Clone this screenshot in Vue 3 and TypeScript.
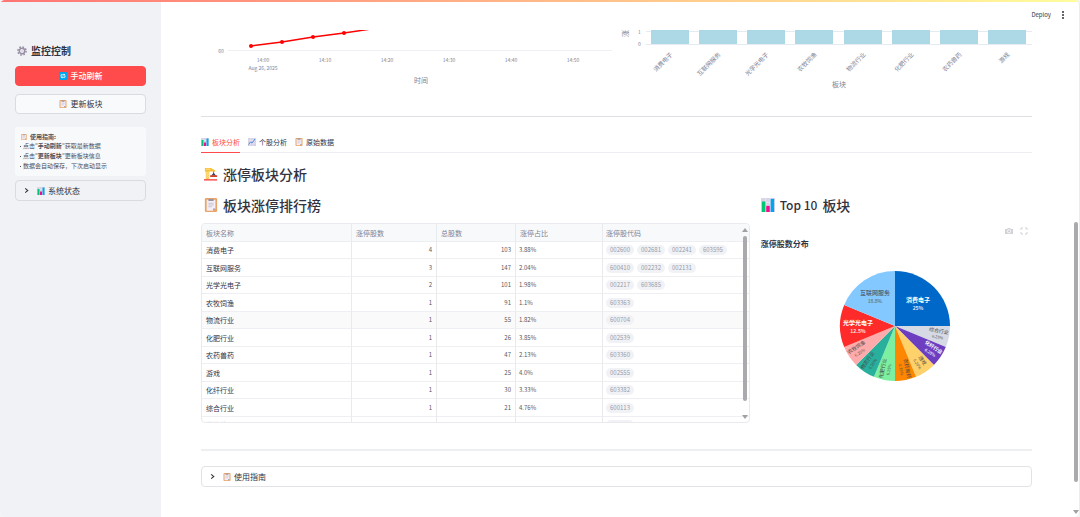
<script setup lang="ts">
interface Row {
  name: string
  hits: number
  total: number
  ratio: string
  codes: string[]
}

interface Slice {
  name: string
  pct: string
  from: number
  to: number
  fill: string
  ink: string
}

const rows: Row[] = [
  { name: '消费电子', hits: 4, total: 103, ratio: '3.88%', codes: ['002600', '002681', '002241', '603595'] },
  { name: '互联网服务', hits: 3, total: 147, ratio: '2.04%', codes: ['600410', '002232', '002131'] },
  { name: '光学光电子', hits: 2, total: 101, ratio: '1.98%', codes: ['002217', '603685'] },
  { name: '农牧饲渔', hits: 1, total: 91, ratio: '1.1%', codes: ['603363'] },
  { name: '物流行业', hits: 1, total: 55, ratio: '1.82%', codes: ['600704'] },
  { name: '化肥行业', hits: 1, total: 26, ratio: '3.85%', codes: ['002539'] },
  { name: '农药兽药', hits: 1, total: 47, ratio: '2.13%', codes: ['603360'] },
  { name: '游戏', hits: 1, total: 25, ratio: '4.0%', codes: ['002555'] },
  { name: '化纤行业', hits: 1, total: 30, ratio: '3.33%', codes: ['603382'] },
  { name: '综合行业', hits: 1, total: 21, ratio: '4.76%', codes: ['600113'] },
  { name: '装修装饰', hits: 1, total: 24, ratio: '4.17%', codes: ['603030'] },
]

const times = ['14:00', '14:10', '14:20', '14:30', '14:40', '14:50']
const sectors = ['消费电子', '互联网服务', '光学光电子', '农牧饲渔', '物流行业', '化肥行业', '农药兽药', '游戏']
const barX = (i: number): number => 30 + Math.floor(i * 48.25)

// Angles in degrees, clockwise, 0 at three o'clock
const slices: Slice[] = [
  { name: '消费电子', pct: '25%', from: -90, to: 0, fill: '#0068c9', ink: '#ffffff' },
  { name: '综合行业', pct: '6.25%', from: 0, to: 22.5, fill: '#d5dae5', ink: '#444444' },
  { name: '化纤行业', pct: '6.25%', from: 22.5, to: 45, fill: '#6d3fc0', ink: '#ffffff' },
  { name: '游戏', pct: '6.25%', from: 45, to: 67.5, fill: '#ffd16a', ink: '#444444' },
  { name: '农药兽药', pct: '6.25%', from: 67.5, to: 90, fill: '#ff8700', ink: '#444444' },
  { name: '化肥行业', pct: '6.25%', from: 90, to: 112.5, fill: '#7defa1', ink: '#444444' },
  { name: '物流行业', pct: '6.25%', from: 112.5, to: 135, fill: '#29b09d', ink: '#444444' },
  { name: '农牧饲渔', pct: '6.25%', from: 135, to: 157.5, fill: '#ffabab', ink: '#444444' },
  { name: '光学光电子', pct: '12.5%', from: 157.5, to: 202.5, fill: '#ff2b2b', ink: '#ffffff' },
  { name: '互联网服务', pct: '18.8%', from: 202.5, to: 270, fill: '#83c9ff', ink: '#444444' },
]

const R = 55
const point = (deg: number, r: number): string => {
  const a = (deg * Math.PI) / 180
  return `${(r * Math.cos(a)).toFixed(2)} ${(r * Math.sin(a)).toFixed(2)}`
}
const wedge = (s: Slice): string => `M0 0L${point(s.from, R)}A${R} ${R} 0 0 1 ${point(s.to, R)}Z`
const small = (s: Slice): boolean => s.to - s.from < 30
const place = (s: Slice): string => {
  const mid = (s.from + s.to) / 2
  if (!small(s)) {
    const spots: Record<string, string> = {
      消费电子: '23 -22',
      光学光电子: '-37 1',
      互联网服务: '-20 -29',
    }
    return `translate(${spots[s.name]})`
  }
  return `translate(${point(mid, 44)}) rotate(${mid > 90 ? mid - 180 : mid})`
}
</script>

<template>
  <div class="app">
    <svg class="defs" aria-hidden="true">
      <symbol id="i-chart" viewBox="0 0 16 16">
        <rect width="16" height="16" rx="1" fill="#d9d3e6" />
        <path d="M0 5h16M0 10h16M5.500 0v16M10.500 0v16" stroke="#f3effa" stroke-width=".7" />
        <rect x="1" y="4" width="4" height="12" fill="#00c774" />
        <rect x="6" y="9" width="4" height="7" fill="#f70a8d" />
        <rect x="11" y="1" width="4" height="15" fill="#00a6ed" />
      </symbol>
      <symbol id="i-trend" viewBox="0 0 16 16">
        <rect width="16" height="16" rx="1" fill="#d5d0e6" />
        <path d="M0 5h16M0 10h16M5 0v16M10 0v16" stroke="#f3effa" stroke-width=".8" />
        <path d="M1 13l4-5 3 2 6-8" fill="none" stroke="#3f83d8" stroke-width="1.800" />
      </symbol>
      <symbol id="i-clip" viewBox="0 0 16 16">
        <rect x="1" y="0" width="14" height="16" rx="1.500" fill="#e8a566" />
        <path d="M3 2h10v10l-2.500 2.500H3z" fill="#f3eef8" />
        <path d="M10.500 14.500V12H13z" fill="#998ea4" />
        <path d="M5 6h6M5 8h6M5 10h4" stroke="#b9b2c2" stroke-width=".8" />
        <path d="M5 1h6v2.500H5z" fill="#9b92a6" />
      </symbol>
      <symbol id="i-crane" viewBox="0 0 16 16">
        <path d="M1 1h7l5 3v1H6v9H2V5H1z" fill="#f9c23c" />
        <path d="M2.500 5.500l3 2.500-3 2.500 3 2.500M5.500 5.500l-3 2.500 3 2.500-3 2.500M2 2.500h5" fill="none" stroke="#fff0bf" stroke-width=".7" />
        <path d="M11 5v3" stroke="#433b6b" stroke-width=".8" />
        <path d="M8 10l3-3.500 3 3.500z" fill="#433b6b" />
        <path d="M7 9.500h8v2H7z" fill="#d3402c" />
        <path d="M0 14h15v1.500H0z" fill="#f8312f" />
      </symbol>
      <symbol id="i-gear" viewBox="0 0 16 16">
        <circle cx="8" cy="8" r="6.500" fill="none" stroke="#998ea4" stroke-width="2.500" stroke-dasharray="2.550 2.550" />
        <circle cx="8" cy="8" r="4.300" fill="none" stroke="#998ea4" stroke-width="2.400" />
        <circle cx="8" cy="8" r="1.200" fill="#c5bccd" />
      </symbol>
      <symbol id="i-sync" viewBox="0 0 16 16">
        <rect width="16" height="16" rx="2" fill="#00a6ed" />
        <path d="M4 9V5.500h6.500M12 7v3.500H5.500" fill="none" stroke="#fff" stroke-width="1.600" />
        <path d="M9.500 3l3 2.500-3 2.500zM6.500 8l-3 2.500 3 2.500z" fill="#fff" />
      </symbol>
      <symbol id="i-chev" viewBox="0 0 8 8">
        <path d="M2.500 1.500L5.500 4 2.500 6.500" fill="none" stroke="#31333f" stroke-width="1.200" />
      </symbol>
    </svg>

    <aside class="side">
      <h2 class="side-title"><svg class="ic10"><use href="#i-gear" /></svg>监控控制</h2>
      <button class="btn primary" type="button"><svg class="ic8"><use href="#i-sync" /></svg>手动刷新</button>
      <button class="btn" type="button"><svg class="ic8"><use href="#i-clip" /></svg>更新板块</button>
      <div class="tips">
        <p class="tips-head"><svg class="ic6"><use href="#i-clip" /></svg><b>使用指南:</b></p>
        <ul>
          <li>点击"<b>手动刷新</b>"获取最新数据</li>
          <li>点击"<b>更新板块</b>"更新板块信息</li>
          <li>数据会自动保存，下次启动显示</li>
        </ul>
      </div>
      <button class="expander" type="button">
        <svg class="chev"><use href="#i-chev" /></svg><svg class="ic8"><use href="#i-chart" /></svg>系统状态
      </button>
    </aside>

    <main class="main">
      <header class="top">
        <button class="deploy" type="button">Deploy</button>
        <button class="dots" type="button" aria-label="菜单">
          <svg viewBox="0 0 4 10"><circle cx="2" cy="2" r="1" /><circle cx="2" cy="5" r="1" /><circle cx="2" cy="8" r="1" /></svg>
        </button>
      </header>

      <div class="content">
        <section class="charts">
          <svg viewBox="0 0 411 78">
            <path d="M27 20.500H411" stroke="#edf0f5" />
            <path d="M50 16L81 12L112 7L143 3L170 -1" fill="none" stroke="#ff0000" stroke-width="1.500" />
            <g fill="#ff0000">
              <circle cx="50" cy="16" r="2" /><circle cx="81" cy="12" r="2" />
              <circle cx="112" cy="7" r="2" /><circle cx="143" cy="3" r="2" />
            </g>
            <g class="axis" text-anchor="middle">
              <text x="20" y="23">60</text>
              <text v-for="(t, i) in times" :key="t" :x="62 + i * 62" y="32">{{ t }}</text>
              <text x="62" y="40">Aug 26, 2025</text>
              <text class="axis-name" x="220" y="53">时间</text>
            </g>
          </svg>
          <svg viewBox="0 0 411 78">
            <path d="M25 1.500H411M25 14.500H411" stroke="#e6eaf1" />
            <rect v-for="(s, i) in sectors" :key="s" :x="barX(i)" y="0" width="38" height="14" fill="#add8e6" />
            <g class="axis">
              <text x="17" y="4">1</text>
              <text x="17" y="16">0</text>
              <text class="axis-name" transform="translate(7 7) rotate(-90)">涨停股数</text>
              <text
                v-for="(s, i) in sectors"
                :key="s"
                class="sector"
                text-anchor="end"
                :transform="`translate(${barX(i) + 22} 25) rotate(-45)`"
              >{{ s }}</text>
              <text class="axis-name" x="218" y="57" text-anchor="middle">板块</text>
            </g>
          </svg>
        </section>
        <hr class="rule" />

        <nav class="tabs" role="tablist">
          <button class="tab on" role="tab" type="button" aria-selected="true"><svg class="ic8"><use href="#i-chart" /></svg>板块分析</button>
          <button class="tab" role="tab" type="button"><svg class="ic8"><use href="#i-trend" /></svg>个股分析</button>
          <button class="tab" role="tab" type="button"><svg class="ic8"><use href="#i-clip" /></svg>原始数据</button>
        </nav>

        <h2 class="head"><svg class="ic14"><use href="#i-crane" /></svg>涨停板块分析</h2>

        <section class="split">
          <div>
            <h2 class="head"><svg class="ic14"><use href="#i-clip" /></svg>板块涨停排行榜</h2>
            <div class="frame">
              <table>
                <colgroup><col class="c1" /><col class="c2" /><col class="c3" /><col class="c4" /><col /></colgroup>
                <thead>
                  <tr><th>板块名称</th><th>涨停股数</th><th>总股数</th><th>涨停占比</th><th>涨停股代码</th></tr>
                </thead>
                <tbody>
                  <tr v-for="r in rows" :key="r.name" :class="{ hover: r.name === '物流行业' }">
                    <td class="name">{{ r.name }}</td>
                    <td class="num">{{ r.hits }}</td>
                    <td class="num">{{ r.total }}</td>
                    <td class="ratio">{{ r.ratio }}</td>
                    <td><div class="codes"><span v-for="c in r.codes" :key="c">{{ c }}</span></div></td>
                  </tr>
                </tbody>
              </table>
              <div class="bar inner"><i class="up"></i><i class="thumb"></i><i class="down"></i></div>
            </div>
          </div>

          <div class="right">
            <h2 class="head"><svg class="ic14"><use href="#i-chart" /></svg><span class="latin">Top 10</span>板块</h2>
            <div class="tools">
              <button type="button" aria-label="下载图片">
                <svg viewBox="0 0 8 8"><path d="M0 2h2l1-1h2l1 1h2v5H0z" fill="#d2d3d8" /><circle cx="4" cy="4.300" r="1.600" fill="#d2d3d8" stroke="#fff" stroke-width=".8" /></svg>
              </button>
              <button type="button" aria-label="全屏">
                <svg viewBox="0 0 8 8"><path d="M1 3V1h2M5 1h2v2M7 5v2H5M3 7H1V5" fill="none" stroke="#d2d3d8" /></svg>
              </button>
            </div>
            <h3 class="pie-title">涨停股数分布</h3>
            <svg class="pie" viewBox="-56 -56 112 112">
              <path v-for="s in slices" :key="s.name" :d="wedge(s)" :fill="s.fill" />
              <g
                v-for="s in slices"
                :key="s.name"
                text-anchor="middle"
                :class="{ small: small(s), strong: s.ink === '#ffffff' }"
                :fill="s.ink"
                :transform="place(s)"
              >
                <text y="-2">{{ s.name }}</text>
                <text class="pct" :y="small(s) ? 4 : 6">{{ s.pct }}</text>
              </g>
            </svg>
          </div>
        </section>

        <hr class="rule low" />
        <button class="expander wide" type="button">
          <svg class="chev"><use href="#i-chev" /></svg><svg class="ic8"><use href="#i-clip" /></svg>使用指南
        </button>
      </div>
    </main>
    <div class="bar page"><i class="thumb"></i><i class="down"></i></div>
  </div>
</template>

<style>
body {
  margin: 0;
  background: #f4f4f4;
}
</style>

<style scoped>
.app {
  position: relative;
  display: flex;
  box-sizing: border-box;
  height: 100vh;
  overflow: hidden;
  border-right: 1px solid #ececec;
  border-radius: 5px;
  background: #fff;
  color: #31333f;
  font-family: "Noto Sans CJK SC", "Noto Sans", sans-serif;
  font-size: 8px;
  line-height: 10px;
}
.app::before {
  content: "";
  position: absolute;
  inset: 0 0 auto;
  height: 2px;
  background: linear-gradient(90deg, #ff7474, #ffc78c 60%, #fffd9c);
}
.defs {
  position: absolute;
  width: 0;
  height: 0;
}
svg {
  flex: none;
}
button {
  margin: 0;
  padding: 0;
  border: 0;
  background: none;
  color: inherit;
  font: inherit;
}
h2,
h3,
p,
ul {
  margin: 0;
}
.ic6 { width: 6px; height: 6px; }
.ic8 { width: 8px; height: 8px; }
.ic10 { width: 10px; height: 10px; }
.ic14 { width: 14px; height: 14px; }
.chev { width: 7px; height: 7px; }

.side {
  display: flex;
  flex: none;
  flex-direction: column;
  box-sizing: border-box;
  width: 161px;
  padding: 44px 15px 0;
  background: #f0f2f6;
}
.side-title {
  display: flex;
  align-items: center;
  gap: 4px;
  padding-left: 2px;
  font-size: 10px;
  font-weight: 700;
  line-height: 14px;
}
.btn {
  display: flex;
  align-items: center;
  justify-content: center;
  gap: 4px;
  box-sizing: border-box;
  height: 20px;
  margin-top: 8px;
  border: 1px solid #d9dbe1;
  border-radius: 4px;
  background: #f9fafc;
}
.btn.primary {
  border-color: #ff4b4b;
  background: #ff4b4b;
  color: #fff;
  font-weight: 500;
}
.tips {
  margin-top: 13px;
  padding: 5px;
  border-radius: 3px;
  background: #f8f9fb;
  color: #4c4e58;
  font-size: 6px;
}
.tips ul {
  padding: 0;
  list-style: none;
  white-space: nowrap;
}
.tips li {
  display: flex;
  align-items: center;
}
.tips li::before {
  content: "";
  width: 1px;
  height: 1px;
  margin-right: 2px;
  background: #4c4e58;
}
.tips-head {
  display: flex;
  align-items: center;
  gap: 3px;
  padding-left: 1px;
  line-height: 9px;
}
.expander {
  display: flex;
  align-items: center;
  gap: 3px;
  box-sizing: border-box;
  width: 100%;
  height: 21px;
  margin-top: 4px;
  padding-left: 7px;
  border: 1px solid #d9dbe1;
  border-radius: 4px;
  text-align: left;
}
.expander .chev {
  margin-right: 4px;
}

.main {
  flex: 1;
  min-width: 0;
}
.top {
  display: flex;
  align-items: center;
  justify-content: flex-end;
  gap: 10px;
  height: 30px;
  padding-right: 14px;
}
.deploy {
  font-size: 6px;
}
.dots {
  display: flex;
}
.dots svg {
  width: 4px;
  height: 10px;
  fill: #31333f;
}
.content {
  padding: 0 47px 0 40px;
}
.charts {
  display: grid;
  grid-template-columns: 1fr 1fr;
  gap: 9px;
}
.charts svg {
  display: block;
  width: 100%;
}
.axis {
  fill: #808495;
  font-size: 5px;
}
.axis .sector {
  font-size: 6px;
}
.axis .axis-name {
  font-size: 7px;
}
.rule {
  height: 1px;
  margin: 8px 0 0;
  border: 0;
  background: #dfe0e3;
}
.tabs {
  display: flex;
  gap: 8px;
  margin-top: 15px;
  border-bottom: 1px solid #eceef2;
}
.tab {
  display: flex;
  align-items: center;
  gap: 3px;
  height: 21px;
  margin-bottom: -1px;
  border-bottom: 1px solid transparent;
  font-size: 7px;
}
.tab.on {
  border-bottom-color: #ff4b4b;
  color: #ff4b4b;
}
.head {
  display: flex;
  align-items: center;
  gap: 5px;
  padding-left: 3px;
  font-size: 14px;
  font-weight: 500;
  line-height: 20px;
}
.tabs + .head {
  margin: 11px 0;
}
.latin {
  font-size: 12px;
}
.split {
  display: grid;
  grid-template-columns: minmax(0, 2fr) minmax(0, 1fr);
  gap: 8px;
}
.frame {
  position: relative;
  box-sizing: border-box;
  height: 200px;
  margin-top: 8px;
  overflow: hidden;
  border: 1px solid #e9eaee;
  border-radius: 4px;
}
table {
  width: 100%;
  border-collapse: separate;
  border-spacing: 0;
  table-layout: fixed;
  font-size: 7px;
}
.c1 { width: 150px; }
.c2 { width: 85px; }
.c3 { width: 79px; }
.c4 { width: 87px; }
th,
td {
  box-sizing: border-box;
  height: 17px;
  padding: 0 4px;
  border-right: 1px solid #e9eaee;
  border-bottom: 1px solid #eeeff2;
  text-align: left;
  line-height: 10px;
}
tbody tr:nth-child(even) td {
  height: 18px;
}
th:last-child,
td:last-child {
  padding-left: 3px;
  border-right: 0;
}
th {
  height: 18px;
  background: #f8f9fb;
  color: #808495;
  font-weight: 400;
}
.hover td {
  background: #fafafb;
}
td.num,
td.ratio {
  color: #55575f;
  font-size: 6px;
}
td.num {
  text-align: right;
}
td.ratio {
  padding-left: 3px;
}
.codes {
  display: flex;
  gap: 3px;
}
.codes span {
  padding: 0 4px;
  border-radius: 5px;
  background: #f0f2f6;
  color: #9a9ca8;
  font-size: 6px;
}
.bar {
  position: absolute;
  display: flex;
  flex-direction: column;
  align-items: center;
  width: 5px;
}
.bar.inner {
  top: 4px;
  right: 1px;
  bottom: 3px;
  gap: 4px;
}
.bar .thumb {
  flex: 1;
  width: 4px;
  border-radius: 2px;
  background: #a9a9ae;
}
.inner .thumb {
  margin-bottom: 10px;
}
.up,
.down {
  width: 0;
  height: 0;
  border: 3px solid transparent;
}
.up {
  border-top: 0;
  border-bottom: 4px solid #a0a0a5;
}
.down {
  border-top: 4px solid #a0a0a5;
  border-bottom: 0;
}
.bar.page {
  top: 43%;
  right: 1px;
  bottom: 3px;
  gap: 28px;
}
.right {
  display: flex;
  flex-direction: column;
}
.tools {
  display: flex;
  justify-content: flex-end;
  gap: 7px;
  margin-top: 12px;
  padding-right: 4px;
}
.tools button {
  display: flex;
}
.tools svg {
  width: 8px;
  height: 8px;
}
.pie-title {
  margin-top: 4px;
  padding-left: 3px;
  font-size: 8px;
  font-weight: 700;
}
.pie {
  align-self: center;
  width: 112px;
  margin-top: 21px;
  font-size: 6px;
}
.pie .strong {
  font-weight: 700;
}
.pie .pct {
  font-size: 5px;
  opacity: 0.85;
}
.pie .small {
  font-size: 5px;
}
.pie .small .pct {
  font-size: 4px;
}
.rule.low {
  height: 2px;
  margin-top: 26px;
  background: #eeeff1;
}
.expander.wide {
  margin-top: 15px;
  border-color: #e2e3e7;
}
</style>
